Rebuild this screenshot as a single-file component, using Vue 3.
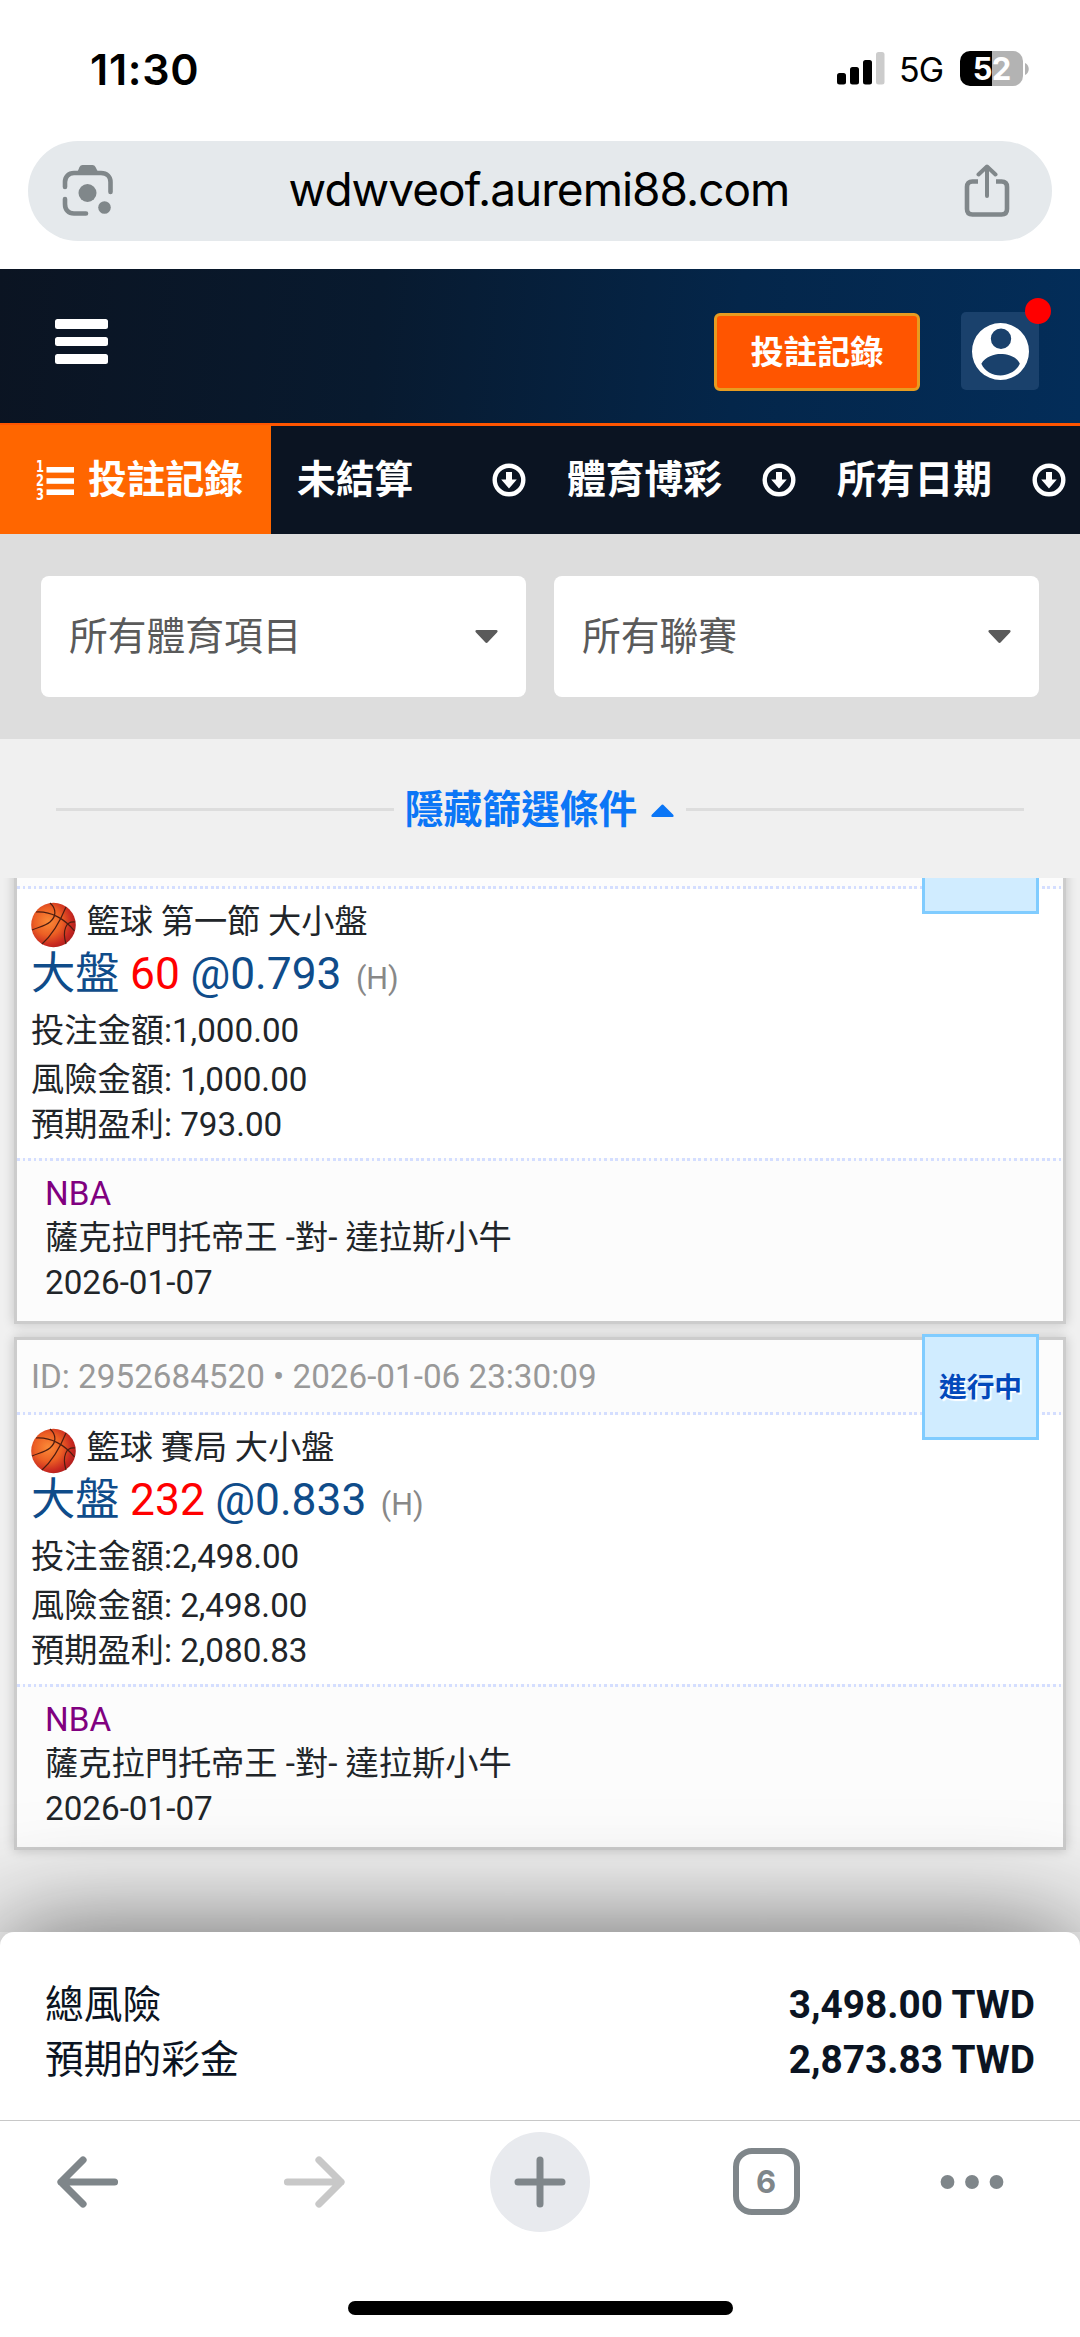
<script setup>
const filters = [
  { label: '未結算' },
  { label: '體育博彩' },
  { label: '所有日期' },
]

const selects = ['所有體育項目', '所有聯賽']

// The first bet is scrolled partly out of view, so its heading is left empty.
const bets = [
  {
    key: 'a',
    heading: '',
    status: '',
    title: '籃球 第一節 大小盤',
    pick: '大盤',
    line: '60',
    odds: '@0.793',
    stake: '1,000.00',
    risk: '1,000.00',
    profit: '793.00',
  },
  {
    key: 'b',
    heading: 'ID: 2952684520 • 2026-01-06 23:30:09',
    status: '進行中',
    title: '籃球 賽局 大小盤',
    pick: '大盤',
    line: '232',
    odds: '@0.833',
    stake: '2,498.00',
    risk: '2,498.00',
    profit: '2,080.83',
  },
]

const totals = [
  { label: '總風險', value: '3,498.00 TWD' },
  { label: '預期的彩金', value: '2,873.83 TWD' },
]
</script>

<template>
  <div class="screen">
    <div class="status">
      <span class="clock">11:30</span>
      <div class="status-right">
        <svg class="signal" width="48" height="33" viewBox="0 0 48 33">
          <rect x="0" y="21" width="9" height="11.5" rx="2.5" />
          <rect x="13" y="15" width="9" height="17.5" rx="2.5" />
          <rect x="26" y="8" width="9" height="24.500" rx="2.500" />
          <rect x="39" y="0" width="8.500" height="32.500" rx="2.500" fill="#ccc" />
        </svg>
        <span class="net">5G</span>
        <div class="battery"><span>52</span></div>
        <svg class="nub" width="4" height="12" viewBox="0 0 4 12"><path d="M0 0C5 2 5 10 0 12Z" fill="#b3b3b3" /></svg>
      </div>
    </div>

    <div class="address">
      <div class="pill">
        <svg width="52" height="54" viewBox="0 0 52 54" fill="none" stroke="#80878a" stroke-width="4.600" stroke-linecap="round">
          <path d="M3 23V18C3 13 6.500 9 12 9H39C45 9 48.500 13 48.500 18V28" />
          <path d="M3 35V40C3 46 6.500 49.500 12 49.500H24" />
          <path d="M15 9L17.500 3Q18.500 1 20.500 1H30.500Q32.500 1 33.500 3L36.500 9Z" fill="#80878a" stroke="none" />
          <circle cx="25.500" cy="29" r="9" fill="#80878a" stroke="none" />
          <circle cx="42.500" cy="43.500" r="6.300" fill="#80878a" stroke="none" />
        </svg>
        <span class="url">wdwveof.auremi88.com</span>
        <svg width="46" height="54" viewBox="0 0 46 54" fill="none" stroke="#80878a" stroke-width="4.600" stroke-linecap="round" stroke-linejoin="round">
          <path d="M14 17.500H8.500Q3 17.500 3 23V45Q3 50.500 8.500 50.500H37.500Q43 50.500 43 45V23Q43 17.500 37.500 17.500H32" stroke-linecap="butt" />
          <path d="M23 32V3M14.500 10.500L23 2.500L31.500 10.500" stroke-width="4" />
        </svg>
      </div>
    </div>

    <header class="header">
      <div class="burger"><i></i><i></i><i></i></div>
      <div class="header-right">
        <button class="history">投註記錄</button>
        <div class="user">
          <svg width="57" height="57" viewBox="0 0 56 56">
            <path
              fill="#fff"
              fill-rule="evenodd"
              d="M28 0A28 28 0 1 1 28 56A28 28 0 1 1 28 0ZM28.500 5.500A10 10 0 1 0 28.500 25.500A10 10 0 1 0 28.500 5.500ZM9.200 40C13 33 22 30.500 28 30.500C35 30.500 44 33 47 40C43.500 47.500 36 51.500 28 51.500C20 51.500 12.500 47.500 9.200 40Z"
            />
          </svg>
          <span class="alert"></span>
        </div>
      </div>
    </header>

    <nav class="tabs">
      <div class="tab active">
        <svg class="numbered" width="39" height="42" viewBox="0 0 39 42" fill="#fff">
          <text class="num" x="0" y="13" textLength="8" lengthAdjust="spacingAndGlyphs">1</text>
          <text class="num" x="0" y="27" textLength="8" lengthAdjust="spacingAndGlyphs">2</text>
          <text class="num" x="0" y="41" textLength="8" lengthAdjust="spacingAndGlyphs">3</text>
          <rect x="10.500" y="8" width="27.500" height="5.600" />
          <rect x="10.500" y="19.200" width="27.500" height="5.600" />
          <rect x="10.500" y="30.400" width="27.500" height="5.600" />
        </svg>
        <span>投註記錄</span>
      </div>
      <div v-for="f in filters" :key="f.label" class="tab">
        <span>{{ f.label }}</span>
        <svg width="34" height="34" viewBox="0 0 34 34">
          <circle cx="17" cy="17" r="14.300" fill="none" stroke="#fff" stroke-width="4.400" />
          <path d="M14 9H20V16.500H24.800L17 25.500L9.200 16.500H14Z" fill="#fff" />
        </svg>
      </div>
    </nav>

    <div class="selects">
      <div v-for="s in selects" :key="s" class="select">
        <span>{{ s }}</span>
        <svg width="23" height="14" viewBox="0 0 23 14"><path d="M1.500 0H21.500Q23.500 .500 22 2.500L13 12Q11.500 13.800 10 12L1 2.500Q-.500 .500 1.500 0Z" fill="#5a5a5a" /></svg>
      </div>
    </div>

    <div class="toggle">
      <i></i>
      <span>隱藏篩選條件</span>
      <svg width="23" height="13" viewBox="0 0 23 13"><path d="M1.500 13H21.500Q23.500 12.500 22 10.500L13 1.500Q11.500 -.500 10 1.500L1 10.500Q-.500 12.500 1.500 13Z" fill="#0b76f6" /></svg>
      <i></i>
    </div>

    <main class="list">
      <article v-for="b in bets" :key="b.key" class="card">
        <div class="card-head">{{ b.heading }}</div>
        <div class="badge">{{ b.status }}</div>
        <div class="dots"></div>
        <div class="card-body">
          <div class="title">
            <svg width="45" height="46" viewBox="0 0 45 46">
              <defs>
                <radialGradient :id="'ball-' + b.key" cx="38%" cy="42%" r="62%">
                  <stop offset="0" stop-color="#fb8b38" />
                  <stop offset=".5" stop-color="#ec5f24" />
                  <stop offset=".85" stop-color="#c92a20" />
                  <stop offset="1" stop-color="#b4201e" />
                </radialGradient>
              </defs>
              <circle cx="22.500" cy="23" r="22.300" :fill="`url(#ball-${b.key})`" />
              <g fill="none" stroke="#4d1d10" stroke-width="1.200">
                <path d="M5 10C20 9 34 17 43.500 29" />
                <path d="M19 1C26 7 25 15 19 20C14 24 8 25 1 28" />
                <path d="M35 5C28 22 20 34 11 42" />
                <path d="M44 20C35 19 31 28 35 42" />
              </g>
            </svg>
            <span>{{ b.title }}</span>
          </div>
          <div class="pick">{{ b.pick }} <em>{{ b.line }}</em> {{ b.odds }} <small>(H)</small></div>
          <div class="stake">投注金額:{{ b.stake }}</div>
          <div>風險金額: {{ b.risk }}</div>
          <div>預期盈利: {{ b.profit }}</div>
        </div>
        <div class="dots"></div>
        <div class="card-foot">
          <div class="league">NBA</div>
          <div>薩克拉門托帝王 -對- 達拉斯小牛</div>
          <div>2026-01-07</div>
        </div>
      </article>
    </main>

    <section class="totals">
      <div v-for="t in totals" :key="t.label" class="total">
        <span>{{ t.label }}</span>
        <b>{{ t.value }}</b>
      </div>
    </section>

    <footer class="toolbar">
      <div class="tools">
        <div class="tool">
          <svg width="64" height="54" viewBox="0 0 64 54" fill="none" stroke="#7f868a" stroke-width="7.200" stroke-linecap="round" stroke-linejoin="round"><path d="M58.500 27H5M27 5L5 27L27 49" /></svg>
        </div>
        <div class="tool">
          <svg width="64" height="54" viewBox="0 0 64 54" fill="none" stroke="#c8c8c8" stroke-width="7.200" stroke-linecap="round" stroke-linejoin="round"><path d="M5.500 27H59M37 5L59 27L37 49" /></svg>
        </div>
        <div class="tool">
          <div class="plus">
            <svg width="52" height="52" viewBox="0 0 52 52" stroke="#7f868a" stroke-width="7" stroke-linecap="round"><path d="M26 4V48M4 26H48" /></svg>
          </div>
        </div>
        <div class="tool"><div class="count">6</div></div>
        <div class="tool more">
          <svg width="64" height="14" viewBox="0 0 64 14" fill="#7f868a"><circle cx="7.500" cy="7" r="6.900" /><circle cx="32" cy="7" r="6.900" /><circle cx="56.500" cy="7" r="6.900" /></svg>
        </div>
      </div>
      <div class="home"></div>
    </footer>
  </div>
</template>

<style scoped>
.screen {
  width: 1080px;
  height: 2337px;
  overflow: hidden;
  display: flex;
  flex-direction: column;
  background: #fff;
  color: #212529;
  font-family: Roboto, 'Noto Sans CJK TC', sans-serif;
  font-size: 33.23px;
}
.screen * {
  box-sizing: border-box;
}
.screen > * {
  flex-shrink: 0;
}
svg {
  display: block;
  flex-shrink: 0;
}

/* status bar */
.status {
  height: 141px;
  padding: 0 51px 4px 90px;
  display: flex;
  align-items: center;
  justify-content: space-between;
  font-family: Inter, sans-serif;
  color: #000;
}
.clock {
  font-size: 43px;
  font-weight: 600;
  letter-spacing: 0.7px;
}
.status-right {
  display: flex;
  align-items: center;
}
.net {
  margin-left: 14px;
  width: 46px;
  font-size: 34px;
  letter-spacing: -0.8px;
  padding-top: 2px;
}
.battery {
  margin-left: 15px;
  width: 63px;
  height: 35px;
  border-radius: 10px;
  background: linear-gradient(90deg, #000 32px, #b3b3b3 32px);
  color: #fff;
  font-size: 31px;
  font-weight: 700;
  line-height: 35px;
  text-align: center;
  letter-spacing: -0.8px;
}
.nub {
  margin-left: 2px;
}

/* address bar */
.address {
  height: 128px;
  padding: 0 28px;
}
.pill {
  height: 100px;
  border-radius: 50px;
  background: #e5e9ec;
  padding: 0 42px 0 34px;
  display: flex;
  align-items: center;
  justify-content: space-between;
}
.url {
  font-family: Inter, sans-serif;
  font-size: 46px;
  line-height: 96px;
  padding-bottom: 4px;
  color: #000;
  white-space: nowrap;
  letter-spacing: -1px;
}

/* site header */
.header {
  height: 157px;
  padding: 0 41px 0 55px;
  display: flex;
  justify-content: space-between;
  border-bottom: 3px solid #ff5500;
  background: linear-gradient(95deg, #0b1422 0%, #081a2f 35%, #04264a 68%, #032d59 100%);
}
.burger {
  width: 53px;
  padding-top: 50px;
  display: flex;
  flex-direction: column;
  gap: 8px;
}
.burger i {
  height: 9.500px;
  border-radius: 2.500px;
  background: #fff;
}
.header-right {
  display: flex;
  gap: 41px;
  padding-top: 43px;
}
.history {
  width: 206px;
  height: 78px;
  margin: 1px 0 0;
  padding: 0 0 5px;
  border: 3px solid #e89c20;
  border-radius: 6px;
  background: #ff5500;
  color: #fff;
  font-family: inherit;
  font-size: 33.23px;
  font-weight: 700;
}
.user {
  position: relative;
  width: 78px;
  height: 78px;
  border-radius: 5px;
  background: #1a416c;
  display: flex;
  align-items: center;
  justify-content: center;
}
.alert {
  position: absolute;
  top: -14px;
  right: -12px;
  width: 26px;
  height: 26px;
  border-radius: 50%;
  background: #f00;
}

/* tab row */
.tabs {
  height: 108px;
  display: grid;
  grid-template-columns: 271px 270px 270px 270px;
  background: #0b1422;
  color: #fff;
  font-size: 38.77px;
  font-weight: 700;
}
.tab {
  display: flex;
  align-items: center;
  justify-content: space-between;
  padding: 0 15px 0 26px;
  line-height: 60px;
}
.tab.active {
  justify-content: flex-start;
  gap: 13px;
  margin-top: -1px;
  padding: 1px 0 0 36px;
  background: #ff6600;
}
.numbered {
  overflow: visible;
}
.num {
  font: 700 16px 'DejaVu Sans', sans-serif;
}

/* drop-downs */
.selects {
  height: 205px;
  padding: 42px 41px;
  display: grid;
  grid-template-columns: 1fr 1fr;
  gap: 28px;
  background: #ddd;
}
.select {
  display: flex;
  align-items: center;
  justify-content: space-between;
  padding: 0 28px 0 28px;
  border-radius: 8px;
  background: #fff;
  color: #5a5a5a;
  font-size: 38.77px;
}
.select span {
  padding-bottom: 8px;
}

/* collapse link */
.toggle {
  height: 139px;
  padding: 0 56px;
  display: flex;
  align-items: center;
  background: #f0f0f0;
  color: #0b76f6;
  font-size: 38.77px;
  font-weight: 700;
}
.toggle i {
  flex: 1;
  height: 3px;
  margin-top: 1px;
  background: #ddd;
}
.toggle span {
  margin: 0 14px 0 11px;
  padding-bottom: 5px;
}
.toggle svg {
  margin: 4px 12px 0 0;
}

/* bet list */
.list {
  height: 1054px;
  overflow: hidden;
  padding: 0 14px;
  display: flex;
  flex-direction: column;
  gap: 13px;
  background: #f0f0f0;
}
.card {
  position: relative;
  flex-shrink: 0;
  height: 513px;
  border: 3px solid #ccc;
  background: #fff;
  box-shadow: 0 0 11px rgba(0, 0, 0, 0.2);
  line-height: 44.3px;
}
.card:first-child {
  margin-top: -67px;
}
.card-head {
  height: 72px;
  padding: 2px 14px 0;
  line-height: 69px;
  background: #fcfcfc;
  color: #999;
}
.badge {
  position: absolute;
  top: -6px;
  right: 24px;
  width: 117px;
  height: 106px;
  border: 3px solid #80ccff;
  background: #d0ecff;
  color: #0349bb;
  font-size: 27.7px;
  font-weight: 700;
  line-height: 101px;
  text-align: center;
  text-shadow: 2px 2px 1px #fff;
}
.dots {
  height: 3px;
  background: repeating-linear-gradient(90deg, #d4deff 0 2.77px, #fcfcfc 2.77px 5.54px);
}
.card-body {
  height: 269px;
  padding: 11px 14px 0;
}
.title {
  height: 45.5px;
  display: flex;
  gap: 11px;
}
.title svg {
  margin: 2px 0 0 -0.5px;
}
.title span {
  word-spacing: -0.5px;
}
.pick {
  height: 63px;
  line-height: 57px;
  font-size: 44.3px;
  color: #0f4c8a;
  word-spacing: -0.5px;
}
.pick em {
  font-style: normal;
  color: #f00;
}
.pick small {
  font-size: 30.500px;
  color: #888;
  margin-left: 4px;
}
.stake {
  margin-bottom: 5.500px;
}
.card-foot {
  height: 160px;
  padding: 11px 28px 0;
  background: #fcfcfc;
}
.league {
  color: #800080;
}

/* totals sheet */
.totals {
  position: relative;
  height: 188px;
  padding: 45px 45px 0;
  border-radius: 14px 14px 0 0;
  background: #fff;
  box-shadow: 0 0 111px rgba(0, 0, 0, 0.6);
  color: #0b1422;
  font-size: 38.77px;
  line-height: 55.4px;
}
.total {
  display: flex;
  justify-content: space-between;
}

/* browser toolbar */
.toolbar {
  position: relative;
  height: 217px;
  background: #fff;
  border-top: 1px solid #c8c8c8;
}
.tools {
  height: 121px;
  padding: 0 0 0 3px;
  display: flex;
  align-items: center;
}
.tool {
  display: flex;
  justify-content: center;
  width: 226px;
}
.tool:first-child {
  width: 170px;
}
.tool:nth-child(2) {
  width: 282px;
}
.tool:nth-child(3) {
  width: 170px;
}
.tool:nth-child(4) {
  width: 282px;
}
.tool.more {
  width: 130px;
}
.plus {
  width: 100px;
  height: 100px;
  border-radius: 50%;
  background: #e8eaee;
  display: flex;
  align-items: center;
  justify-content: center;
}
.count {
  width: 67px;
  height: 67px;
  border: 6px solid #7f868a;
  border-radius: 19px;
  color: #7f868a;
  font: 700 31px/56px Inter, sans-serif;
  text-align: center;
}
.home {
  width: 385px;
  height: 14px;
  margin: 59px auto 0;
  border-radius: 7px;
  background: #000;
}
</style>

<style>
body {
  margin: 0;
}
</style>
